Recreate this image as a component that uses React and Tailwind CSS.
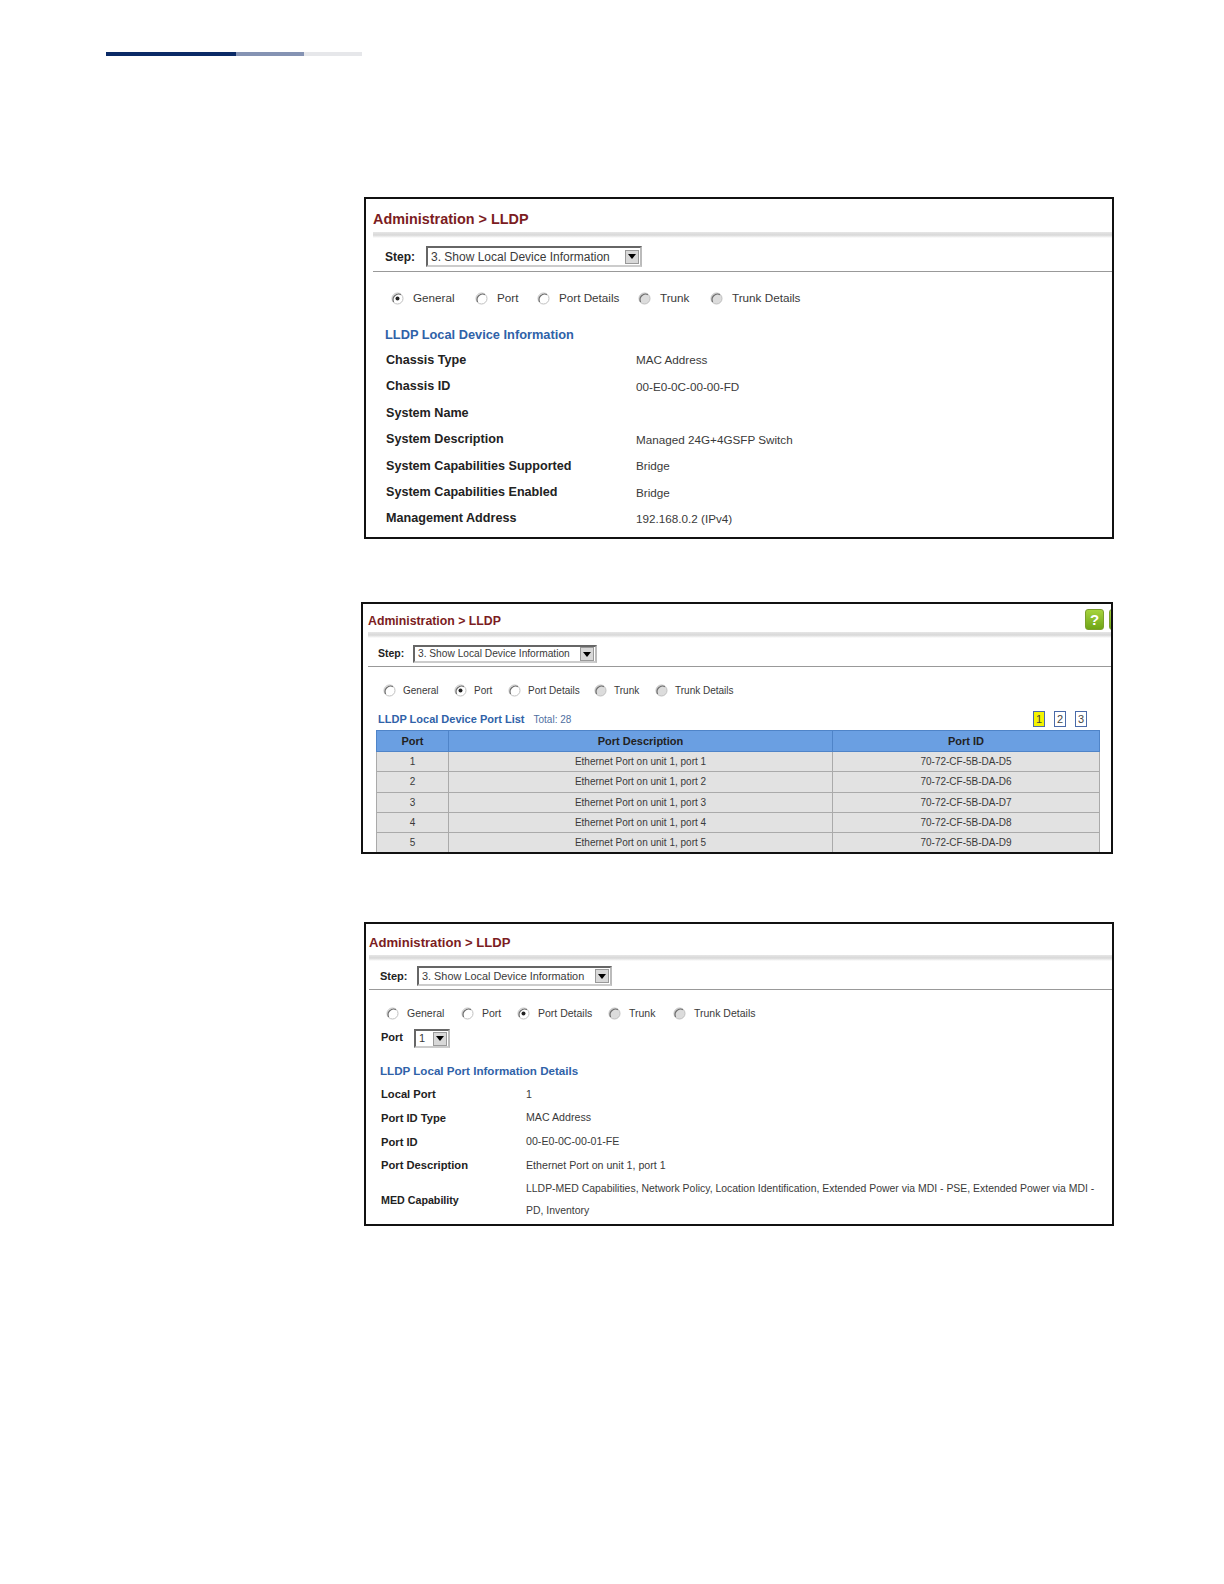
const FONT = "font-['Liberation_Sans',Arial,sans-serif]";

function Radio({ checked, disabled }) {
  return (
    <svg width="13" height="13" viewBox="0 0 13 13" className="shrink-0">
      <circle cx="6.5" cy="6.5" r="5.5" fill={disabled ? '#dcdcdc' : '#fff'} stroke="#c0c0c0" />
      <path d="M2.6 9.9A5.5 5.5 0 0 1 9.9 2.6" fill="none" stroke="#6f6f6f" strokeWidth="1.2" />
      {checked && <circle cx="6.5" cy="6.5" r="2" fill="#222" />}
    </svg>
  );
}

function RadioRow({ items, active, gap, className, textClass }) {
  return (
    <div className={`flex items-center ${className}`}>
      {items.map((it, i) => (
        <div key={it.label} className="flex items-center shrink-0" style={{ width: it.w }}>
          <Radio checked={i === active} disabled={i > 2} />
          <span className={`text-[#3a3a3a] whitespace-nowrap ${textClass}`} style={{ marginLeft: gap }}>{it.label}</span>
        </div>
      ))}
    </div>
  );
}

function FakeSelect({ children, className, textClass }) {
  return (
    <div className={`flex items-center bg-white border-2 border-t-[#666] border-l-[#666] border-r-[#bbb] border-b-[#ccc] ${className}`}>
      <span className={`flex-1 text-[#3a3a3a] whitespace-nowrap pl-[3px] ${textClass}`}>{children}</span>
      <span className="w-[14px] h-[14px] mr-[1px] bg-[#d8d8d8] border border-[#999] flex items-center justify-center">
        <span className="w-0 h-0 border-x-[4px] border-x-transparent border-t-[5px] border-t-black"></span>
      </span>
    </div>
  );
}

function Band({ className }) {
  return <div className={`h-[6px] bg-gradient-to-b from-[#e6e6e6] via-[#d8d8d8] to-white ${className}`}></div>;
}

function Field({ label, value, labelClass, valueClass, rowClass }) {
  return (
    <div className={`flex items-center ${rowClass}`}>
      <div className={`font-bold text-[#222] shrink-0 ${labelClass}`}>{label}</div>
      <div className={`text-[#3a3a3a] ${valueClass}`}>{value}</div>
    </div>
  );
}

function FirstPanel() {
  const rows = [
    ['Chassis Type', 'MAC Address'],
    ['Chassis ID', '00-E0-0C-00-00-FD'],
    ['System Name', ''],
    ['System Description', 'Managed 24G+4GSFP Switch'],
    ['System Capabilities Supported', 'Bridge'],
    ['System Capabilities Enabled', 'Bridge'],
    ['Management Address', '192.168.0.2 (IPv4)'],
  ];
  const radios = [
    { label: 'General', w: 84 },
    { label: 'Port', w: 62 },
    { label: 'Port Details', w: 101 },
    { label: 'Trunk', w: 72 },
    { label: 'Trunk Details', w: 110 },
  ];
  return (
    <section className="ml-[364px] mt-[141px] w-[750px] h-[342px] border-2 border-[#111] bg-white overflow-hidden">
      <h2 className="ml-[7px] mt-[11px] text-[14.4px] leading-[18px] font-bold text-[#7b1c22]">Administration &gt; LLDP</h2>
      <Band className="ml-[7px] mt-[4px]" />
      <div className="flex items-center mt-[8px] h-[21px]">
        <span className="ml-[19px] w-[41px] text-[12px] font-bold text-[#222]">Step:</span>
        <FakeSelect className="w-[216px] h-[21px]" textClass="text-[12px]">3. Show Local Device Information</FakeSelect>
      </div>
      <div className="ml-[7px] mt-[4px] h-[1px] bg-[#999]"></div>
      <RadioRow items={radios} active={0} gap="9px" className="ml-[25px] mt-[18px] h-[16px]" textClass="text-[11.7px]" />
      <h3 className="ml-[19px] mt-[20px] text-[12.8px] leading-[18px] font-bold text-[#2f62a8]">LLDP Local Device Information</h3>
      <div className="mt-[3px]">
        {rows.map(r => (
          <Field key={r[0]} label={r[0]} value={r[1]} rowClass="h-[26.45px]" labelClass="ml-[20px] w-[250px] text-[12.6px]" valueClass="text-[11.7px]" />
        ))}
      </div>
    </section>
  );
}

function SecondPanel() {
  const radios = [
    { label: 'General', w: 71 },
    { label: 'Port', w: 54 },
    { label: 'Port Details', w: 86 },
    { label: 'Trunk', w: 61 },
    { label: 'Trunk Details', w: 110 },
  ];
  return (
    <section className="ml-[361px] mt-[63px] w-[752px] h-[252px] border-2 border-[#111] bg-white overflow-hidden">
      <div className="flex items-start justify-between h-[27px]">
        <h2 className="ml-[5px] mt-[9px] text-[12.3px] leading-[17px] font-bold text-[#7b1c22]">Administration &gt; LLDP</h2>
        <div className="flex gap-[5px] mt-[5px] -mr-[17px] shrink-0">
          <div className="w-[19px] h-[21px] rounded-[3px] bg-gradient-to-b from-[#a6d43c] to-[#6fa516] border border-[#7c9f2c] text-white text-[15px] leading-[19px] font-bold text-center">?</div>
          <div className="w-[19px] h-[21px] rounded-[3px] bg-gradient-to-b from-[#a6d43c] to-[#6fa516] border border-[#7c9f2c]"></div>
        </div>
      </div>
      <Band className="ml-[5px] mt-[1px]" />
      <div className="flex items-center mt-[7px] h-[18px]">
        <span className="ml-[15px] w-[35px] text-[10.5px] font-bold text-[#222]">Step:</span>
        <FakeSelect className="w-[184px] h-[18px]" textClass="text-[10.2px]">3. Show Local Device Information</FakeSelect>
      </div>
      <div className="ml-[5px] mt-[3px] h-[1px] bg-[#999]"></div>
      <RadioRow items={radios} active={1} gap="7px" className="ml-[20px] mt-[16px] h-[14px]" textClass="text-[10px]" />
      <div className="flex items-center justify-between mt-[14px] h-[16px] mr-[24px]">
        <div className="flex items-baseline ml-[15px]">
          <span className="text-[11px] font-bold text-[#2f62a8]">LLDP Local Device Port List</span>
          <span className="ml-[9px] text-[10px] text-[#4f6f9f]">Total: 28</span>
        </div>
        <div className="flex gap-[9px]">
          <span className="w-[12px] h-[16px] bg-[#f4f400] border border-[#4a6aa8] text-[11px] leading-[14px] text-center text-[#444]">1</span>
          <span className="w-[12px] h-[16px] border border-[#4a6aa8] text-[11px] leading-[14px] text-center text-[#444]">2</span>
          <span className="w-[12px] h-[16px] border border-[#4a6aa8] text-[11px] leading-[14px] text-center text-[#444]">3</span>
        </div>
      </div>
      <table className="ml-[13px] mt-[3px] w-[724px] border-collapse table-fixed text-[10px] text-[#3a3a3a]">
        <colgroup>
          <col className="w-[72px]" />
          <col className="w-[384px]" />
          <col />
        </colgroup>
        <thead>
          <tr className="h-[21px] bg-[#6a9fe2]">
            {['Port', 'Port Description', 'Port ID'].map(h => (
              <th key={h} className="border border-[#4f84c8] text-[11px] font-bold text-[#222] p-0">{h}</th>
            ))}
          </tr>
        </thead>
        <tbody>
          {['D5', 'D6', 'D7', 'D8', 'D9'].map((id, i) => (
            <tr key={id} className="h-[20.3px] bg-[#e2e2e2]">
              <td className="border border-[#aaa] text-center p-0">{i + 1}</td>
              <td className="border border-[#aaa] text-center p-0">Ethernet Port on unit 1, port {i + 1}</td>
              <td className="border border-[#aaa] text-center p-0">70-72-CF-5B-DA-{id}</td>
            </tr>
          ))}
        </tbody>
      </table>
    </section>
  );
}

function ThirdPanel() {
  const rows = [
    ['Local Port', '1'],
    ['Port ID Type', 'MAC Address'],
    ['Port ID', '00-E0-0C-00-01-FE'],
    ['Port Description', 'Ethernet Port on unit 1, port 1'],
  ];
  const radios = [
    { label: 'General', w: 75 },
    { label: 'Port', w: 56 },
    { label: 'Port Details', w: 91 },
    { label: 'Trunk', w: 65 },
    { label: 'Trunk Details', w: 110 },
  ];
  return (
    <section className="ml-[364px] mt-[68px] w-[750px] h-[304px] border-2 border-[#111] bg-white overflow-hidden">
      <h2 className="ml-[3px] mt-[10px] text-[13.1px] leading-[17px] font-bold text-[#7b1c22]">Administration &gt; LLDP</h2>
      <Band className="ml-[3px] mt-[4px]" />
      <div className="flex items-center mt-[5px] h-[20px]">
        <span className="ml-[14px] w-[37px] text-[11px] font-bold text-[#222]">Step:</span>
        <FakeSelect className="w-[195px] h-[20px]" textClass="text-[10.9px]">3. Show Local Device Information</FakeSelect>
      </div>
      <div className="ml-[3px] mt-[3px] h-[1px] bg-[#999]"></div>
      <RadioRow items={radios} active={2} gap="8px" className="ml-[20px] mt-[16px] h-[15px]" textClass="text-[10.5px]" />
      <div className="flex items-center mt-[8px] h-[19px]">
        <span className="ml-[15px] w-[33px] pb-[2px] text-[11px] font-bold text-[#222]">Port</span>
        <FakeSelect className="w-[36px] h-[19px]" textClass="text-[11px]">1</FakeSelect>
      </div>
      <h3 className="ml-[14px] mt-[15px] text-[11.6px] leading-[16px] font-bold text-[#2f62a8]">LLDP Local Port Information Details</h3>
      <div className="mt-[4px]">
        {rows.map(r => (
          <Field key={r[0]} label={r[0]} value={r[1]} rowClass="h-[23.6px]" labelClass="ml-[15px] w-[145px] text-[11.2px]" valueClass="text-[10.65px]" />
        ))}
        <Field
          label="MED Capability"
          value="LLDP-MED Capabilities, Network Policy, Location Identification, Extended Power via MDI - PSE, Extended Power via MDI - PD, Inventory"
          rowClass="h-[44px] mt-[1px]"
          labelClass="ml-[15px] w-[145px] text-[10.7px]"
          valueClass="text-[10.45px] leading-[22px] w-[578px]"
        />
      </div>
    </section>
  );
}

export default function App() {
  return (
    <div className={`w-[1224px] h-[1584px] bg-white overflow-hidden pt-[52px] ${FONT}`}>
      <div className="flex h-[4px] ml-[106px]">
        <div className="w-[130px] bg-[#0a2a66]"></div>
        <div className="w-[68px] bg-[#8593b3]"></div>
        <div className="w-[58px] bg-[#e6e7ea]"></div>
      </div>
      <FirstPanel />
      <SecondPanel />
      <ThirdPanel />
    </div>
  );
}
